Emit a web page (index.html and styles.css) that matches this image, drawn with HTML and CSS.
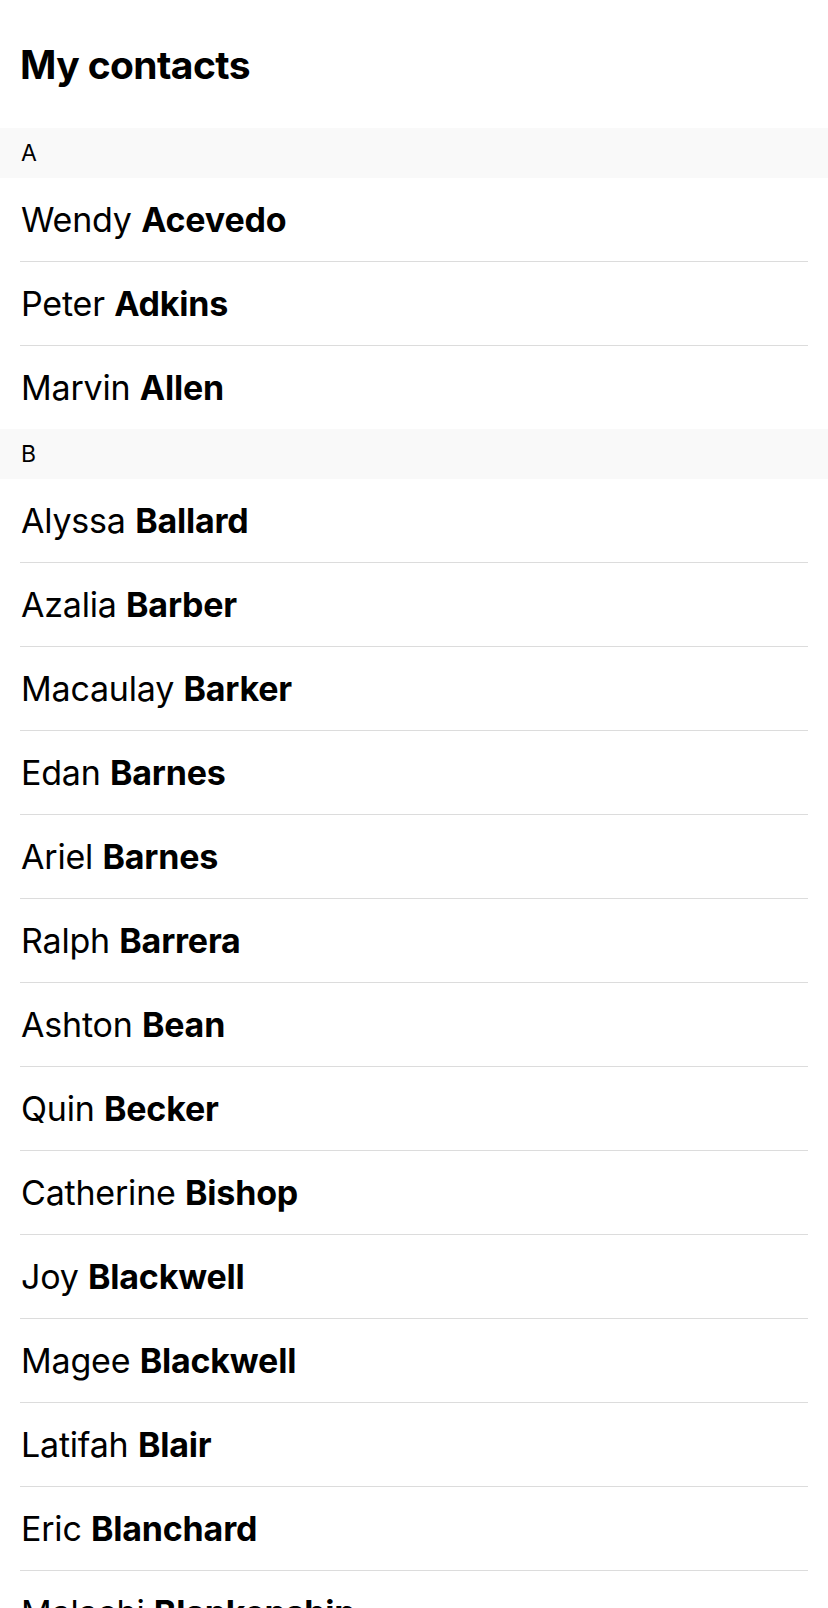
FILE: index.html
```html
<!DOCTYPE html>
<html>
<head>
<meta charset="utf-8">
<link rel="stylesheet" href="styles.css">
</head>
<body>
<div class="screen">
  <header class="top"><h1 class="title">My contacts</h1></header>
  <section class="group">
    <div class="letter">A</div>
    <ul class="rows">
      <li class="row"><span class="name">Wendy <b>Acevedo</b></span></li>
      <li class="row"><span class="name">Peter <b>Adkins</b></span></li>
      <li class="row"><span class="name">Marvin <b>Allen</b></span></li>
    </ul>
  </section>
  <section class="group">
    <div class="letter">B</div>
    <ul class="rows">
      <li class="row"><span class="name">Alyssa <b>Ballard</b></span></li>
      <li class="row"><span class="name">Azalia <b>Barber</b></span></li>
      <li class="row"><span class="name">Macaulay <b>Barker</b></span></li>
      <li class="row"><span class="name">Edan <b>Barnes</b></span></li>
      <li class="row"><span class="name">Ariel <b>Barnes</b></span></li>
      <li class="row"><span class="name">Ralph <b>Barrera</b></span></li>
      <li class="row"><span class="name">Ashton <b>Bean</b></span></li>
      <li class="row"><span class="name">Quin <b>Becker</b></span></li>
      <li class="row"><span class="name">Catherine <b>Bishop</b></span></li>
      <li class="row"><span class="name">Joy <b>Blackwell</b></span></li>
      <li class="row"><span class="name">Magee <b>Blackwell</b></span></li>
      <li class="row"><span class="name">Latifah <b>Blair</b></span></li>
      <li class="row"><span class="name">Eric <b>Blanchard</b></span></li>
      <li class="row"><span class="name">Malachi <b>Blankenship</b></span></li>
    </ul>
  </section>
</div>
</body>
</html>
```
FILE: styles.css
```css
html, body {
  margin: 0;
  padding: 0;
  background: #ffffff;
}
body {
  font-family: Inter, "Noto Sans", "Liberation Sans", sans-serif;
  color: #000;
  overflow: hidden;
}
.screen {
  display: flex;
  flex-direction: column;
}
.top {
  height: 128px;
  display: flex;
  align-items: center;
  padding: 0 20px;
  box-sizing: border-box;
}
.title {
  margin: 0;
  font-size: 39px;
  font-weight: 700;
  letter-spacing: -0.6px;
  line-height: 1;
}
.letter {
  height: 50px;
  background: #f9f9f9;
  display: flex;
  align-items: center;
  padding: 0 21px;
  font-size: 23px;
  line-height: 1;
}
.rows {
  list-style: none;
  margin: 0;
  padding: 0 20px;
}
.row {
  height: 83px;
  display: flex;
  align-items: center;
  border-bottom: 1px solid #dcdcdc;
}
.row:last-child {
  border-bottom: none;
}
.name {
  font-size: 34px;
  line-height: 1;
  white-space: nowrap;
  letter-spacing: -0.2px;
  padding-left: 1px;
}
.name b {
  font-weight: 700;
}
```
